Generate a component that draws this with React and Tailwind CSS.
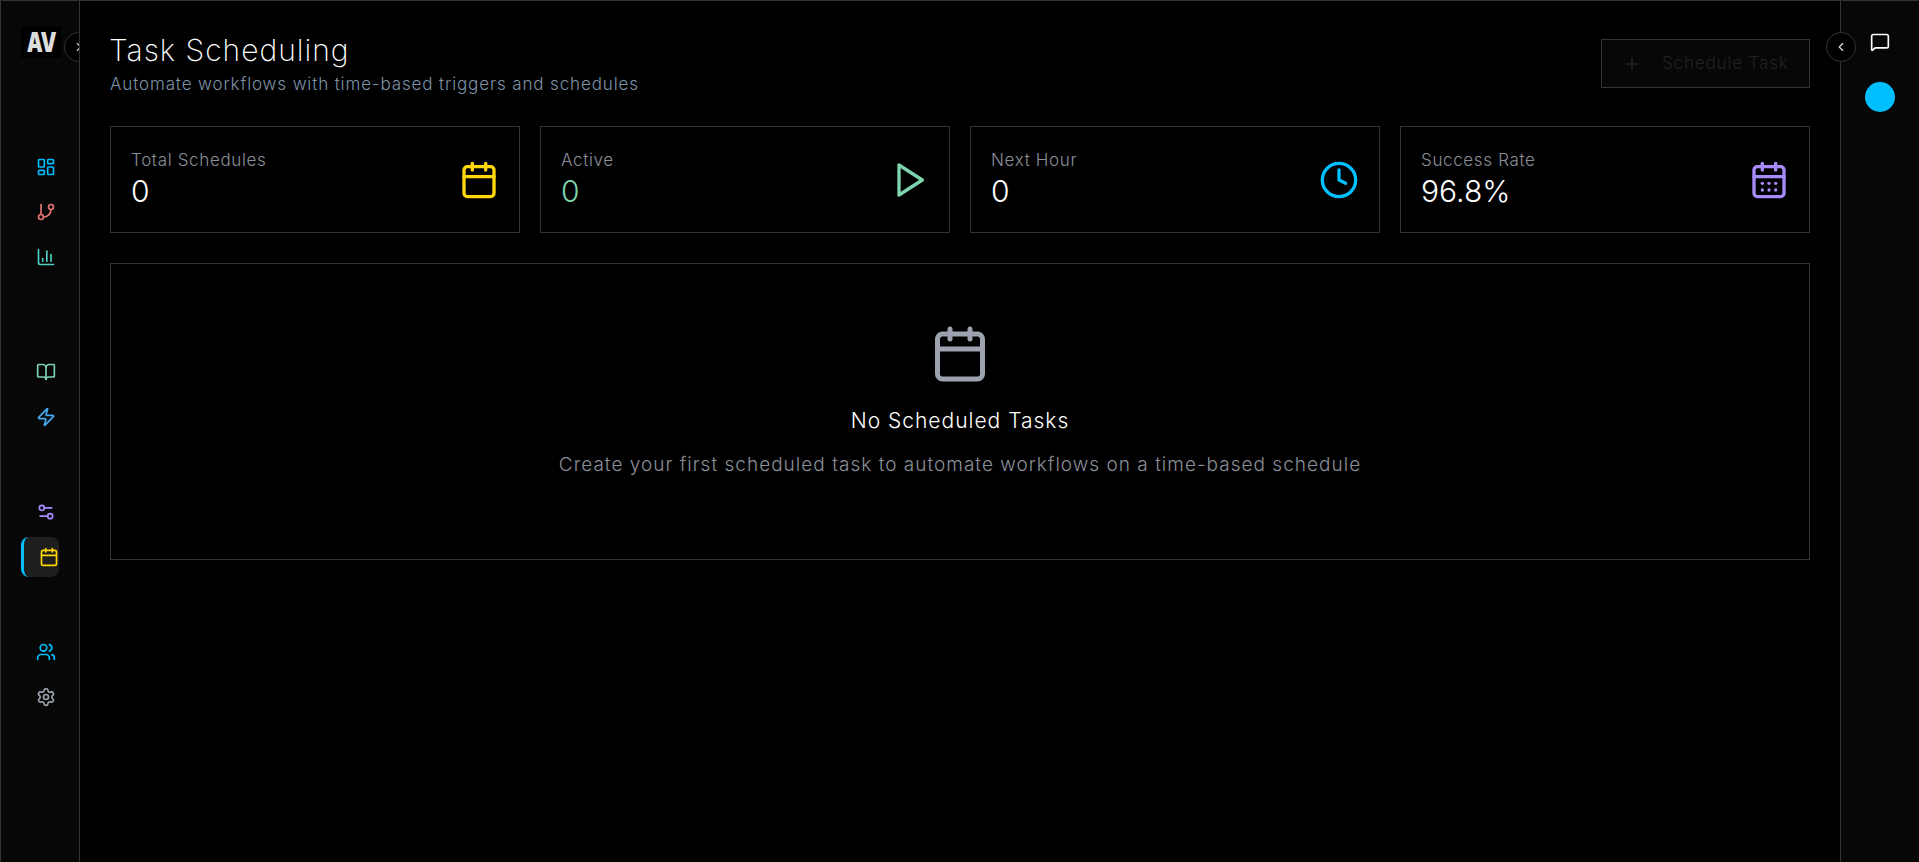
import React from 'react';
import {
    LayoutDashboard, GitBranch, ChartColumn, BookOpen, Zap, Settings2, Calendar, Users, Settings,
    MessageSquare, Clock, CalendarDays, Plus, ChevronLeft, ChevronRight,
} from 'lucide-react';

const navGroups = [
    { gap: 'mt-0', items: [
        { icon: LayoutDashboard, color: 'text-[#00bfff]' },
        { icon: GitBranch, color: 'text-[#e57373]' },
        { icon: ChartColumn, color: 'text-[#4ecdc4]' },
    ] },
    { gap: 'mt-[75px]', items: [
        { icon: BookOpen, color: 'text-[#7dd3ae]' },
        { icon: Zap, color: 'text-[#45aaf2]' },
    ] },
    { gap: 'mt-[55px]', items: [
        { icon: Settings2, color: 'text-[#a78bfa]' },
        { icon: Calendar, color: 'text-[#ffd60a]', active: true },
    ] },
    { gap: 'mt-[55px]', items: [
        { icon: Users, color: 'text-[#00bfff]' },
        { icon: Settings, color: 'text-[#9ca3af]' },
    ] },
];

// the play icon in the picture is the sharp triangle, not lucide's rounded one
const PlayTriangle = ({ size, className }) => (
    <svg width={size} height={size} viewBox="0 0 24 24" fill="none" stroke="currentColor" strokeWidth="2" strokeLinejoin="round" className={className}>
        <polygon points="6 3 20 12 6 21 6 3" />
    </svg>
);

const stats = [
    { label: 'Total Schedules', value: '0', valueColor: 'text-white', icon: Calendar, iconColor: 'text-[#ffd60a]' },
    { label: 'Active', value: '0', valueColor: 'text-[#7dd3ae]', icon: PlayTriangle, iconColor: 'text-[#7dd3ae]' },
    { label: 'Next Hour', value: '0', valueColor: 'text-white', icon: Clock, iconColor: 'text-[#00bfff]' },
    { label: 'Success Rate', value: '96.8%', valueColor: 'text-white', icon: CalendarDays, iconColor: 'text-[#a78bfa]' },
];

const Sidebar = () => (
    <aside className="relative w-[78px] shrink-0 bg-[#070707]">
        <div className="absolute left-[63px] top-[31px] flex h-[30px] w-[30px] items-center justify-center rounded-full border border-[#333333] bg-black text-[#cccccc]">
            <ChevronRight size={14} />
        </div>
        <div className="absolute left-[20px] top-[25px] flex h-[32px] w-[40px] items-center justify-center bg-black font-['Inter',sans-serif] text-[27px] font-black leading-none tracking-[-1px] text-[#dddddd]">
            <span className="scale-x-75">AV</span>
        </div>
        <nav className="ml-[20px] w-[38px] pt-[146px]">
            {navGroups.map((group, i) => (
                <div key={i} className={`flex flex-col gap-[5px] ${group.gap}`}>
                    {group.items.map((item, j) => (
                        <div
                            key={j}
                            className={`flex h-[40px] items-center pl-[15px] ${item.active ? 'rounded-lg border-l-[3px] border-[#00bfff] bg-[#1e1e1e]' : ''}`}
                        >
                            <item.icon size={20} className={`shrink-0 ${item.color}`} />
                        </div>
                    ))}
                </div>
            ))}
        </nav>
    </aside>
);

const StatCard = ({ label, value, valueColor, icon: Icon, iconColor }) => (
    <div className="flex h-[107px] items-center justify-between border border-[#333333] bg-black px-5">
        <div>
            <p className="text-[17px] font-light leading-6 tracking-[0.65px] text-[#8b8f99]">{label}</p>
            <p className={`-mt-px text-[30px] font-light leading-10 ${valueColor}`}>{value}</p>
        </div>
        <Icon size={40} className={iconColor} />
    </div>
);

export default function App() {
    return (
        <div className="flex h-screen overflow-hidden border-l border-t border-[#333333] bg-black font-['Inter',sans-serif]">
            <Sidebar />
            <main className="relative z-10 flex-1 border-x border-[#333333] bg-black px-[30px] pt-[31px]">
                <div className="flex items-start justify-between">
                    <div>
                        <h1 className="-ml-px text-[30px] font-extralight leading-9 tracking-[1px] text-white">Task Scheduling</h1>
                        <p className="mt-1 text-[17px] font-light leading-6 tracking-[0.87px] text-[#7f93a8]">
                            Automate workflows with time-based triggers and schedules
                        </p>
                    </div>
                    <button className="mt-[7px] flex h-[49px] w-[209px] items-center gap-5 border border-[#333333] bg-[#070707] pl-5 pt-px text-[17px] font-light tracking-[0.85px] text-[#222222]">
                        <Plus size={20} />
                        Schedule Task
                    </button>
                </div>

                <div className="mt-[30px] grid grid-cols-4 gap-5">
                    {stats.map(stat => <StatCard key={stat.label} {...stat} />)}
                </div>

                <section className="mt-[30px] flex h-[297px] flex-col items-center border border-[#333333] bg-black pt-[60px]">
                    <Calendar size={60} className="text-[#9ca3af]" />
                    <h2 className="mt-[23px] text-[21px] font-light leading-7 tracking-[1px] text-white">No Scheduled Tasks</h2>
                    <p className="mt-[16px] text-[19px] font-light leading-7 tracking-[1.02px] text-[#8b8f99]">
                        Create your first scheduled task to automate workflows on a time-based schedule
                    </p>
                </section>

                <div className="absolute right-[-16px] top-[31px] z-20 flex h-[30px] w-[30px] items-center justify-center rounded-full border border-[#333333] bg-black text-[#dddddd]">
                    <ChevronLeft size={14} />
                </div>
            </main>
            <aside className="flex w-[78px] shrink-0 flex-col items-center bg-[#070707] pt-[31px]">
                <MessageSquare size={20} className="text-white" />
                <div className="mt-[30px] h-[30px] w-[30px] rounded-full bg-[#00bfff]" />
            </aside>
        </div>
    );
}
